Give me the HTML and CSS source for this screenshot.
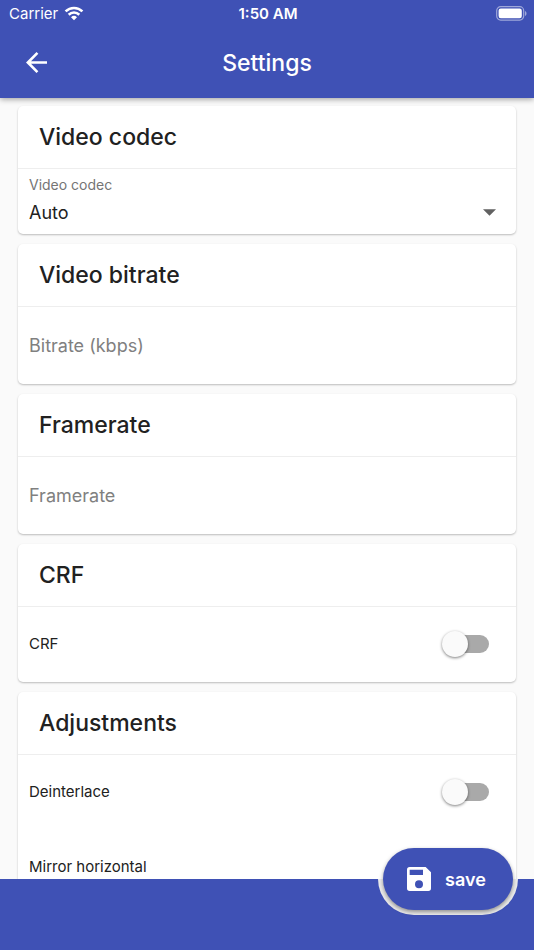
FILE: index.html
```html
<!DOCTYPE html>
<html lang="en">
<head>
<meta charset="utf-8">
<meta name="viewport" content="width=device-width, initial-scale=1">
<title>Settings</title>
<link rel="stylesheet" href="styles.css">
</head>
<body>
<header class="top">
  <div class="status">
    <div class="carrier">
      <span>Carrier</span>
      <svg class="wifi" viewBox="0 0 20 15" aria-hidden="true">
        <path d="M1.6 5.4a12 12 0 0 1 16.8 0" />
        <path d="M4.7 8.7a7.6 7.6 0 0 1 10.6 0" />
        <path class="solid" d="M10 14.2l-3-3a4.3 4.3 0 0 1 6 0z" />
      </svg>
    </div>
    <time class="clock">1:50 AM</time>
    <svg class="battery" viewBox="0 0 31 15" aria-hidden="true">
      <rect class="shell" x="0.7" y="0.7" width="27" height="13.4" rx="4" />
      <rect class="charge" x="2.6" y="2.6" width="23.2" height="9.6" rx="2.2" />
      <path class="cap" d="M29 5c2 .7 2 4.300 0 5z" />
    </svg>
  </div>
  <nav class="bar">
    <button class="back" type="button" aria-label="Back">
      <svg viewBox="4 4 16 16" aria-hidden="true"><path d="M20 11H7.830l5.590-5.590L12 4l-8 8 8 8 1.410-1.410L7.830 13H20z" /></svg>
    </button>
    <h1>Settings</h1>
  </nav>
</header>
<main class="content">
  <section class="card">
    <h2>Video codec</h2>
    <div class="choice">
      <label for="codec">Video codec</label>
      <div class="picker">
        <select id="codec"><option>Auto</option></select>
        <svg viewBox="0 0 12 6" aria-hidden="true"><path d="M0 0h12L6 6z" /></svg>
      </div>
    </div>
  </section>
  <section class="card">
    <h2>Video bitrate</h2>
    <input class="field" type="text" aria-label="Bitrate (kbps)" placeholder="Bitrate (kbps)">
  </section>
  <section class="card">
    <h2>Framerate</h2>
    <input class="field" type="text" aria-label="Framerate" placeholder="Framerate">
  </section>
  <section class="card">
    <h2>CRF</h2>
    <label class="toggle"><span>CRF</span><input type="checkbox" role="switch"></label>
  </section>
  <section class="card">
    <h2>Adjustments</h2>
    <label class="toggle"><span>Deinterlace</span><input type="checkbox" role="switch"></label>
    <label class="toggle"><span>Mirror horizontal</span><input type="checkbox" role="switch"></label>
  </section>
</main>
<footer class="bottom">
  <div class="notch"></div>
  <button class="save" type="button">
    <svg viewBox="3 3 18 18" aria-hidden="true"><path d="M17 3H5a2 2 0 0 0-2 2v14a2 2 0 0 0 2 2h14a2 2 0 0 0 2-2V7zm-5 16a3 3 0 1 1 0-6 3 3 0 0 1 0 6zm3-10H5V5h10z" /></svg>
    <span>save</span>
  </button>
</footer>
</body>
</html>
```
FILE: styles.css
```css
* { box-sizing: border-box; }

body {
  margin: 0;
  height: 100vh;
  display: flex;
  flex-direction: column;
  overflow: hidden;
  background: #fafafa;
  color: #212121;
  font-family: Inter, "Liberation Sans", sans-serif;
}

button, input, select { font: inherit; color: inherit; }

.top {
  flex: none;
  position: relative;
  z-index: 1;
  background: #3f51b5;
  color: #fff;
  box-shadow: 0 1px 6px rgba(0, 0, 0, 0.4);
}

.status {
  display: grid;
  grid-template-columns: 1fr auto 1fr;
  align-items: center;
  height: 27px;
  padding: 0 7px 0 9px;
  font-size: 15px;
  line-height: 27px;
}

.carrier { display: flex; align-items: center; gap: 6px; }
.wifi { width: 20px; height: 15px; fill: none; stroke: #fff; stroke-width: 2.6; }
.wifi .solid { fill: #fff; stroke: none; }
.clock { font-weight: 600; }
.battery { width: 31px; height: 15px; justify-self: end; }
.shell { fill: none; stroke: #9fa8da; stroke-width: 1.2; }
.charge { fill: #fff; }
.cap { fill: #9fa8da; }

.bar {
  display: grid;
  grid-template-columns: 48px 1fr 48px;
  align-items: center;
  height: 71px;
  padding: 0 12px;
}

.back {
  display: grid;
  place-items: center;
  height: 48px;
  padding: 0;
  border: 0;
  background: none;
}
.back svg { width: 21px; height: 21px; fill: #fff; }

h1 {
  margin: 0;
  font-size: 23px;
  font-weight: 500;
  line-height: 32px;
  text-align: center;
}

.content {
  flex: 1;
  min-height: 0;
  overflow: hidden;
  display: flex;
  flex-direction: column;
  gap: 10px;
  padding: 8px 18px 0;
}

.card {
  flex: none;
  border-radius: 5px;
  background: #fff;
  box-shadow: 0 1px 2px rgba(0, 0, 0, 0.25);
}

h2 {
  margin: 0;
  padding: 0 21px;
  border-bottom: 1px solid #eee;
  font-size: 23px;
  font-weight: 500;
  line-height: 62px;
}

.choice { padding: 5px 11px 6px; }
.choice label {
  display: block;
  color: #757575;
  font-size: 14px;
  line-height: 22px;
}
.picker { position: relative; }
.picker select {
  display: block;
  width: 100%;
  height: 32px;
  padding: 0;
  border: 0;
  appearance: none;
  background: none;
  font-size: 18px;
}
.picker svg {
  position: absolute;
  top: 13px;
  right: 9px;
  width: 13px;
  height: 7px;
  fill: #616161;
  pointer-events: none;
}

.field {
  display: block;
  width: 100%;
  height: 77px;
  padding: 0 11px;
  border: 0;
  background: none;
  font-size: 18px;
}
.field::placeholder { color: #808080; opacity: 1; }

.toggle {
  display: flex;
  align-items: center;
  justify-content: space-between;
  height: 75px;
  padding: 0 27px 2px 11px;
  font-size: 15px;
}
.toggle input {
  position: relative;
  width: 47px;
  height: 18px;
  margin: 0;
  appearance: none;
}
.toggle input::before {
  content: "";
  display: block;
  height: 18px;
  margin-left: 5px;
  border-radius: 9px;
  background: #a9a9a9;
}
.toggle input::after {
  content: "";
  position: absolute;
  top: -4px;
  left: 0;
  width: 26px;
  height: 26px;
  border-radius: 50%;
  background: #fafafa;
  box-shadow: 0 1px 3px rgba(0, 0, 0, 0.5);
}

.bottom {
  flex: none;
  position: relative;
  height: 71px;
  background: #3f51b5;
}
.notch {
  position: absolute;
  top: 0;
  right: 16px;
  width: 140px;
  height: 36px;
  border-radius: 0 0 36px 36px;
  background: #ececec;
}
.save {
  position: absolute;
  top: -31px;
  right: 21px;
  display: flex;
  align-items: center;
  justify-content: center;
  gap: 14px;
  width: 130px;
  height: 62px;
  padding: 0 3px 0 0;
  border: 0;
  border-radius: 31px;
  background: #3f51b5;
  color: #fff;
  font-size: 18px;
  font-weight: 600;
  box-shadow: 0 2px 4px rgba(0, 0, 0, 0.4);
}
.save svg { width: 24px; height: 24px; fill: #fff; }
```
